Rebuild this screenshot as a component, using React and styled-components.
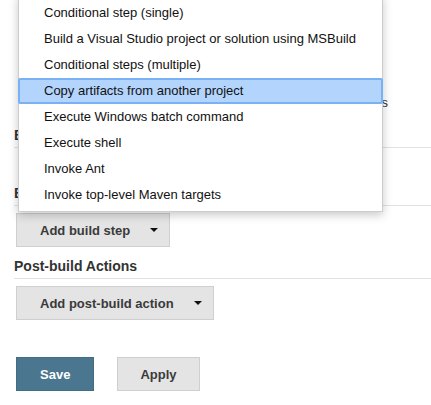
import React from 'react';
import styled, { createGlobalStyle } from 'styled-components';

const GlobalStyle = createGlobalStyle`
  body {
    margin: 0;
    background: #fff;
    font-family: "Liberation Sans", Arial, Helvetica, sans-serif;
  }
`;

const Page = styled.div`
  position: relative;
  width: 431px;
  height: 405px;
  overflow: hidden;
  background: #fff;
  padding-left: 14px;
  box-sizing: border-box;
  color: #333;
`;

const TopArea = styled.div`
  height: 127px;
  padding: 95px 43px 0 0;
  box-sizing: border-box;
  text-align: right;
  font-size: 13px;
  line-height: 16px;
  color: #333;
`;

const SectionHeading = styled.h3`
  margin: ${(p) => p.$gap || 0}px 0 0;
  font-size: 14px;
  font-weight: bold;
  line-height: 17px;
  padding-bottom: 3px;
  border-bottom: 1px solid #e2e2e2;
  color: #333;
`;

const ButtonRow = styled.div`
  display: flex;
  gap: ${(p) => p.$gap || 0}px;
  padding-left: 2px;
  margin-top: ${(p) => p.$top || 0}px;
`;

const DropButton = styled.button`
  display: inline-flex;
  align-items: center;
  gap: 20px;
  height: 34px;
  box-sizing: border-box;
  padding: 0 11px 0 23px;
  border: 1px solid #cfcfcf;
  background: #e4e4e4;
  font-family: inherit;
  font-size: 13px;
  font-weight: bold;
  color: #3a3a3a;
  cursor: pointer;
`;

const Caret = styled.span`
  width: 0;
  height: 0;
  border-left: 4px solid transparent;
  border-right: 4px solid transparent;
  border-top: 4px solid #111;
`;

const ActionButton = styled.button`
  height: 34px;
  box-sizing: border-box;
  padding: 0 ${(p) => (p.$primary ? 23 : 22)}px;
  border: 1px solid ${(p) => (p.$primary ? '#416d84' : '#cfcfcf')};
  background: ${(p) => (p.$primary ? '#4a778f' : '#e4e4e4')};
  color: ${(p) => (p.$primary ? '#fff' : '#3a3a3a')};
  font-family: inherit;
  font-size: 13px;
  font-weight: bold;
  cursor: pointer;
`;

const Menu = styled.ul`
  position: absolute;
  left: 18px;
  top: -5px;
  width: 365px;
  box-sizing: border-box;
  margin: 0;
  padding: 4px 0 3px;
  list-style: none;
  background: #fff;
  border: 1px solid #cdcdcd;
  box-shadow: 0 3px 9px rgba(0, 0, 0, 0.22);
`;

const MenuItem = styled.li`
  height: 26px;
  line-height: ${(p) => (p.$active ? 22 : 26)}px;
  box-sizing: border-box;
  padding-left: ${(p) => (p.$active ? 24 : 25)}px;
  margin: ${(p) => (p.$active ? '0 -1px' : '0')};
  font-size: 13px;
  color: #111;
  white-space: nowrap;
  cursor: default;
  background: ${(p) => (p.$active ? '#b3d4fc' : 'transparent')};
  border: ${(p) => (p.$active ? '2px solid #78b2f4' : 'none')};
  border-radius: ${(p) => (p.$active ? '2px' : '0')};
`;

const steps = [
  'Conditional step (single)',
  'Build a Visual Studio project or solution using MSBuild',
  'Conditional steps (multiple)',
  'Copy artifacts from another project',
  'Execute Windows batch command',
  'Execute shell',
  'Invoke Ant',
  'Invoke top-level Maven targets',
];

const App = () => {
  return (
    <Page>
      <GlobalStyle />
      <TopArea>Delete workspace before build starts</TopArea>
      <SectionHeading>Build Environment</SectionHeading>
      <SectionHeading $gap={37}>Build</SectionHeading>
      <ButtonRow $top={7}>
        <DropButton>
          Add build step
          <Caret />
        </DropButton>
      </ButtonRow>
      <SectionHeading $gap={11}>Post-build Actions</SectionHeading>
      <ButtonRow $top={7}>
        <DropButton>
          Add post-build action
          <Caret />
        </DropButton>
      </ButtonRow>
      <ButtonRow $top={37} $gap={23}>
        <ActionButton $primary>Save</ActionButton>
        <ActionButton>Apply</ActionButton>
      </ButtonRow>

      <Menu>
        {steps.map((s, i) => (
          <MenuItem key={s} $active={i === 3}>
            {s}
          </MenuItem>
        ))}
      </Menu>
    </Page>
  );
};

export default App;
